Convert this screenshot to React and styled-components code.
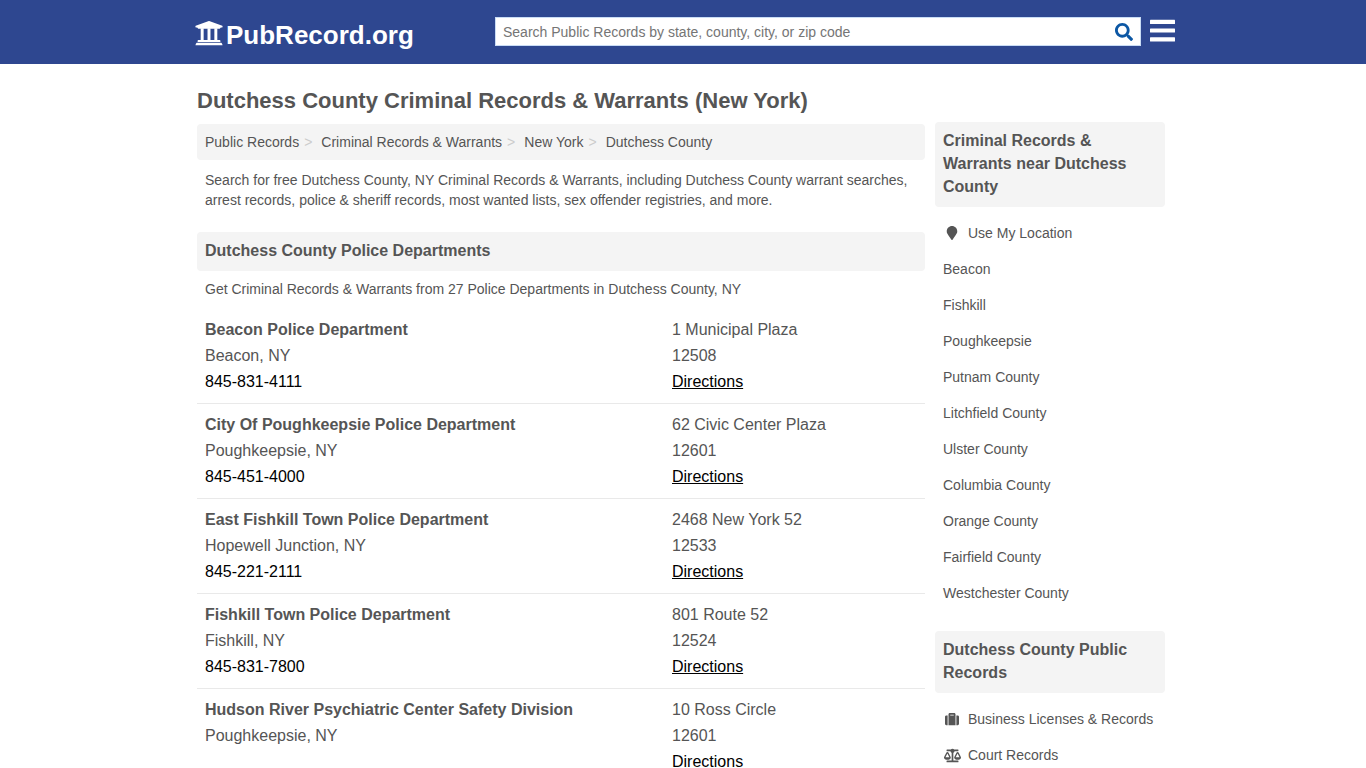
import React from 'react';
import styled, { createGlobalStyle } from 'styled-components';
import { FaSearch, FaMapMarker, FaSuitcase, FaBalanceScale } from 'react-icons/fa';

const GlobalStyle = createGlobalStyle`
  *, *::before, *::after { box-sizing: border-box; }
  body {
    margin: 0;
    background: #fff;
    color: #555;
    font: 14px/20px "Liberation Sans", Arial, Helvetica, sans-serif;
  }
  a { color: inherit; text-decoration: none; }
  h1, h2, h3, p, ul, ol { margin: 0; padding: 0; }
  ul, ol { list-style: none; }
`;

const Header = styled.header`
  background: #2e4790;
`;

const HeaderInner = styled.div`
  display: flex;
  align-items: flex-start;
  max-width: 988px;
  height: 64px;
  margin: 0 auto;
  padding-left: 6px;
`;

const Logo = styled.a`
  display: flex;
  flex: 0 0 300px;
  align-items: center;
  gap: 3px;
  height: 70px;
  color: #fff;
  font-size: 26px;
  line-height: 30px;
  font-weight: bold;
  svg { width: 28px; height: 28px; margin-bottom: 4px; }
`;

const SearchForm = styled.form`
  display: flex;
  flex: 1;
  min-width: 0;
  margin-top: 17px;
  height: 29px;
  background: #fff;
  border: 1px solid #c9dcf5;
`;

const SearchInput = styled.input`
  flex: 1;
  min-width: 0;
  padding: 0 7px;
  border: 0;
  outline: 0;
  background: transparent;
  color: #555;
  font: inherit;
  &::placeholder { color: #757575; opacity: 1; }
`;

const SearchButton = styled.button`
  display: flex;
  align-items: center;
  justify-content: center;
  width: 32px;
  padding: 0;
  border: 0;
  background: transparent;
  color: #0c57a4;
  font-size: 18px;
  cursor: pointer;
`;

const MenuButton = styled.button`
  display: flex;
  margin: 19px 0 0 8px;
  padding: 0;
  width: 28px;
  border: 0;
  background: transparent;
  color: #fff;
  cursor: pointer;
`;

const Page = styled.div`
  display: flex;
  align-items: flex-start;
  gap: 10px;
  max-width: 976px;
  margin: 0 auto;
  padding: 24px 6px 24px 2px;
`;

const Main = styled.main`
  flex: 1;
  min-width: 0;
`;

const Sidebar = styled.aside`
  flex: 0 0 230px;
  padding-top: 34px;
`;

const Title = styled.h1`
  margin-bottom: 10px;
  font-size: 22px;
  line-height: 26px;
`;

const Breadcrumb = styled.ol`
  display: flex;
  padding: 8px;
  border-radius: 4px;
  background: #f4f4f4;
`;

const Crumb = styled.li`
  &:not(:last-child)::after {
    content: ">";
    padding: 0 9px 0 5px;
    color: #ccc;
  }
`;

const Text = styled.p`
  padding: ${({ $intro }) => ($intro ? '10px 8px 22px' : '8px')};
`;

const Heading = styled.h2`
  padding: 7px 8px 9px;
  border-radius: 4px;
  background: #f4f4f4;
  font-size: 16px;
  line-height: 23px;
`;

const DepartmentList = styled.ul`
  && { padding-top: 2px; }
`;

const Row = styled.li`
  display: grid;
  grid-template-columns: 467px 1fr;
  padding: 8px;
  border-bottom: 1px solid #e9e9e9;
  font-size: 16px;
  line-height: 26px;
`;

const Cell = styled.div`
  display: flex;
  flex-direction: column;
  align-items: flex-start;
`;

const Name = styled.h3`
  font-size: 16px;
  line-height: 26px;
`;

const ActionLink = styled.a`
  color: #000;
  text-decoration: ${({ $underlined }) => ($underlined ? 'underline' : 'none')};
`;

const SideList = styled.ul`
  padding: 8px 0 20px;
`;

const SideLink = styled.a`
  display: flex;
  align-items: center;
  gap: 7px;
  padding: 8px;
`;

const SideIcon = styled.span`
  display: flex;
  justify-content: center;
  width: 18px;
`;

const crumbs = ['Public Records', 'Criminal Records & Warrants', 'New York', 'Dutchess County'];

const departments = [
  { name: 'Beacon Police Department', city: 'Beacon, NY', phone: '845-831-4111', street: '1 Municipal Plaza', zip: '12508' },
  { name: 'City Of Poughkeepsie Police Department', city: 'Poughkeepsie, NY', phone: '845-451-4000', street: '62 Civic Center Plaza', zip: '12601' },
  { name: 'East Fishkill Town Police Department', city: 'Hopewell Junction, NY', phone: '845-221-2111', street: '2468 New York 52', zip: '12533' },
  { name: 'Fishkill Town Police Department', city: 'Fishkill, NY', phone: '845-831-7800', street: '801 Route 52', zip: '12524' },
  { name: 'Hudson River Psychiatric Center Safety Division', city: 'Poughkeepsie, NY', street: '10 Ross Circle', zip: '12601' },
];

const nearby = [
  { label: 'Use My Location', icon: <FaMapMarker size={14} /> },
  ...['Beacon', 'Fishkill', 'Poughkeepsie', 'Putnam County', 'Litchfield County', 'Ulster County',
    'Columbia County', 'Orange County', 'Fairfield County', 'Westchester County'].map((label) => ({ label })),
];

const records = [
  { label: 'Business Licenses & Records', icon: <FaSuitcase size={14} /> },
  { label: 'Court Records', icon: <FaBalanceScale size={17} /> },
];

function CourthouseIcon() {
  return (
    <svg viewBox="0 0 512 512" fill="currentColor" aria-hidden="true">
      <path d="M504 132v14a8 8 0 0 1-8 8h-24l-20 24H60l-20-24H16a8 8 0 0 1-8-8v-14a8 8 0 0 1 5-7l240-88a8 8 0 0 1 6 0l240 88a8 8 0 0 1 5 7z" />
      <path d="M104 170h54v214h71V170h54v214h71V170h54v214h44c7 0 12 5 12 12v26H48v-26c0-7 5-12 12-12h44z" />
      <path d="M472 432H40c-13 0-24 11-24 24l-8 18a8 8 0 0 0 8 8h480a8 8 0 0 0 8-8l-8-18c0-13-11-24-24-24z" />
    </svg>
  );
}

function SideSection({ title, items }) {
  return (
    <section>
      <Heading>{title}</Heading>
      <SideList>
        {items.map(({ label, icon }) => (
          <li key={label}>
            <SideLink href="#">
              {icon && <SideIcon>{icon}</SideIcon>}
              {label}
            </SideLink>
          </li>
        ))}
      </SideList>
    </section>
  );
}

function Department({ name, city, phone, street, zip }) {
  return (
    <Row>
      <Cell>
        <Name><a href="#">{name}</a></Name>
        <span>{city}</span>
        {phone && <ActionLink href={`tel:${phone}`}>{phone}</ActionLink>}
      </Cell>
      <Cell>
        <span>{street}</span>
        <span>{zip}</span>
        <ActionLink href="#" $underlined>Directions</ActionLink>
      </Cell>
    </Row>
  );
}

export default function App() {
  return (
    <>
      <GlobalStyle />
      <Header>
        <HeaderInner>
          <Logo href="#"><CourthouseIcon />PubRecord.org</Logo>
          <SearchForm role="search" onSubmit={(e) => e.preventDefault()}>
            <SearchInput
              type="text"
              aria-label="Search Public Records"
              placeholder="Search Public Records by state, county, city, or zip code"
            />
            <SearchButton type="submit" aria-label="Search"><FaSearch /></SearchButton>
          </SearchForm>
          <MenuButton type="button" aria-label="Menu">
            <svg width="28" height="24" viewBox="0 0 28 24" fill="currentColor" aria-hidden="true">
              <rect x="1" y="0.8" width="25" height="4.2" rx="0.5" />
              <rect x="1" y="9.4" width="25" height="4.2" rx="0.5" />
              <rect x="1" y="18.2" width="25" height="4.2" rx="0.5" />
            </svg>
          </MenuButton>
        </HeaderInner>
      </Header>
      <Page>
        <Main>
          <Title>Dutchess County Criminal Records &amp; Warrants (New York)</Title>
          <nav aria-label="Breadcrumb">
            <Breadcrumb>
              {crumbs.map((crumb) => (
                <Crumb key={crumb}><a href="#">{crumb}</a></Crumb>
              ))}
            </Breadcrumb>
          </nav>
          <Text $intro>
            Search for free Dutchess County, NY Criminal Records &amp; Warrants, including Dutchess County
            warrant searches, arrest records, police &amp; sheriff records, most wanted lists, sex offender
            registries, and more.
          </Text>
          <Heading>Dutchess County Police Departments</Heading>
          <Text>Get Criminal Records &amp; Warrants from 27 Police Departments in Dutchess County, NY</Text>
          <DepartmentList>
            {departments.map((d) => <Department key={d.name} {...d} />)}
          </DepartmentList>
        </Main>
        <Sidebar>
          <SideSection title="Criminal Records & Warrants near Dutchess County" items={nearby} />
          <SideSection title="Dutchess County Public Records" items={records} />
        </Sidebar>
      </Page>
    </>
  );
}
